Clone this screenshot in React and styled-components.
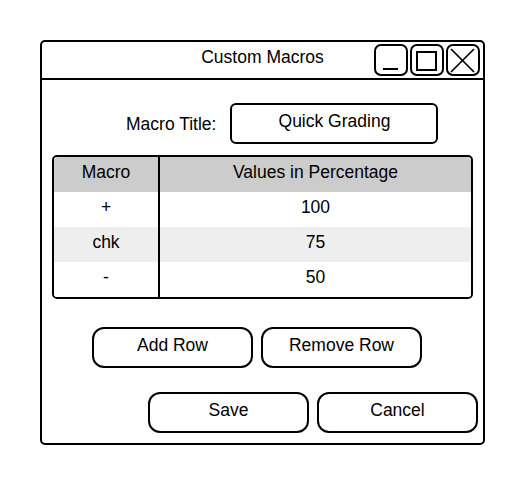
import styled, { createGlobalStyle } from 'styled-components';

const GlobalStyle = createGlobalStyle`
  html, body {
    margin: 0;
    padding: 0;
    background: #ffffff;
  }
  body {
    font-family: "Liberation Sans", Arial, sans-serif;
    font-size: 17.5px;
    color: #000000;
  }
  * {
    box-sizing: border-box;
  }
`;

const Page = styled.div`
  padding: 40px 0 0 40px;
`;

const Window = styled.div`
  width: 445px;
  height: 405px;
  border: 2px solid #000;
  border-radius: 5px;
  display: flex;
  flex-direction: column;
`;

const TitleBar = styled.div`
  height: 38px;
  border-bottom: 2px solid #000;
  display: grid;
  grid-template-columns: 1fr auto 1fr;
  align-items: center;
`;

const Title = styled.div`
  grid-column: 2;
  font-size: 17.5px;
  padding-bottom: 6px;
`;

const Controls = styled.div`
  grid-column: 3;
  justify-self: end;
  display: flex;
  gap: 2px;
  padding-right: 3px;
`;

const ControlButton = styled.div`
  width: ${({ $w }) => $w}px;
  height: 32px;
  border: 2px solid #000;
  border-radius: 7px;
  display: flex;

  svg {
    width: 100%;
    height: 100%;
  }
`;

const Body = styled.div`
  flex: 1;
  display: flex;
  flex-direction: column;
  padding: 23px 10px 0;
`;

const TitleRow = styled.div`
  display: flex;
  align-items: center;
  gap: 14px;
  padding-left: 74px;
`;

const Label = styled.span`
  padding-top: 1px;
`;

const TitleInput = styled.div`
  width: 208px;
  height: 41px;
  border: 2px solid #000;
  border-radius: 6px;
  display: flex;
  align-items: center;
  justify-content: center;
  padding-bottom: 4px;
`;

const Table = styled.div`
  margin-top: 11px;
  border: 2px solid #000;
  border-radius: 5px;
  overflow: hidden;
  display: grid;
  grid-template-columns: 106px 1fr;
`;

const Cell = styled.div`
  height: 35px;
  display: flex;
  align-items: center;
  justify-content: center;
  padding-bottom: 4px;
  background: ${({ $bg }) => $bg};
  border-right: ${({ $first }) => ($first ? '2px solid #000' : 'none')};
`;

const ButtonRow = styled.div`
  display: flex;
  gap: 8px;
  margin-top: ${({ $top }) => $top}px;
  padding-left: ${({ $left }) => $left}px;
`;

const Button = styled.div`
  flex-shrink: 0;
  width: 161px;
  height: 41px;
  border: 2px solid #000;
  border-radius: 12px;
  display: flex;
  align-items: center;
  justify-content: center;
  padding-bottom: 4px;
`;

const rows = [
  { macro: '+', value: '100' },
  { macro: 'chk', value: '75' },
  { macro: '-', value: '50' },
];

const rowBg = (i) => (i % 2 === 1 ? '#eeeeee' : '#ffffff');

export default function App() {
  return (
    <>
      <GlobalStyle />
      <Page>
        <Window>
          <TitleBar>
            <Title>Custom Macros</Title>
            <Controls>
              <ControlButton $w={34}>
                <svg viewBox="0 0 30 28" fill="none" stroke="#000" strokeWidth="2">
                  <line x1="7" y1="23" x2="22" y2="23" />
                </svg>
              </ControlButton>
              <ControlButton $w={34}>
                <svg viewBox="0 0 30 28" fill="none" stroke="#000" strokeWidth="2">
                  <rect x="5" y="6" width="19" height="18" />
                </svg>
              </ControlButton>
              <ControlButton $w={34}>
                <svg viewBox="0 0 30 28" fill="none" stroke="#000" strokeWidth="1.7">
                  <line x1="3" y1="3" x2="26" y2="26" />
                  <line x1="26" y1="3" x2="3" y2="26" />
                </svg>
              </ControlButton>
            </Controls>
          </TitleBar>
          <Body>
            <TitleRow>
              <Label>Macro Title:</Label>
              <TitleInput>Quick Grading</TitleInput>
            </TitleRow>
            <Table>
              <Cell $first $bg="#cccccc">Macro</Cell>
              <Cell $bg="#cccccc">Values in Percentage</Cell>
              {rows.map((row, i) => [
                <Cell key={`m${i}`} $first $bg={rowBg(i)}>
                  {row.macro}
                </Cell>,
                <Cell key={`v${i}`} $bg={rowBg(i)}>
                  {row.value}
                </Cell>,
              ])}
            </Table>
            <ButtonRow $top={28} $left={40}>
              <Button>Add Row</Button>
              <Button>Remove Row</Button>
            </ButtonRow>
            <ButtonRow $top={24} $left={96}>
              <Button>Save</Button>
              <Button>Cancel</Button>
            </ButtonRow>
          </Body>
        </Window>
      </Page>
    </>
  );
}
